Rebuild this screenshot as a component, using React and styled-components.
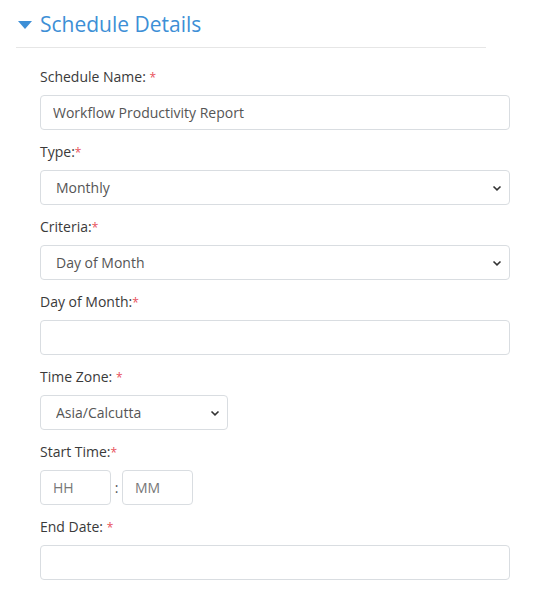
import React from 'react';
import styled, { createGlobalStyle } from 'styled-components';

const GlobalStyle = createGlobalStyle`
  body {
    margin: 0;
    background: #fff;
    font-family: "Open Sans", "Noto Sans", Arial, sans-serif;
  }
`;

const fields = [
  { label: 'Schedule Name:', space: true, kind: 'input', value: 'Workflow Productivity Report' },
  { label: 'Type:', kind: 'select', value: 'Monthly' },
  { label: 'Criteria:', kind: 'select', value: 'Day of Month' },
  { label: 'Day of Month:', kind: 'input', value: '' },
  { label: 'Time Zone:', space: true, kind: 'select', value: 'Asia/Calcutta', narrow: true },
  { label: 'Start Time:', kind: 'time' },
  { label: 'End Date:', space: true, kind: 'input', value: '' },
];

const Chevron = () => (
  <ChevronIcon width="10" height="10" viewBox="0 0 10 10">
    <path d="M1.5 3.5 L5 6.8 L8.5 3.5" fill="none" stroke="#333" strokeWidth="1.6" />
  </ChevronIcon>
);

const Control = ({ field }) => {
  if (field.kind === 'select') {
    return (
      <SelectWrap $narrow={field.narrow}>
        <Select defaultValue={field.value}>
          <option>{field.value}</option>
        </Select>
        <Chevron />
      </SelectWrap>
    );
  }
  if (field.kind === 'time') {
    return (
      <TimeRow>
        <TimeInput placeholder="HH" />
        <Colon>:</Colon>
        <TimeInput placeholder="MM" />
      </TimeRow>
    );
  }
  return <Input defaultValue={field.value} />;
};

const App = () => (
  <>
    <GlobalStyle />
    <Section>
      <Header>
        <Caret width="14" height="10" viewBox="0 0 14 10">
          <path d="M0 1 H14 L7 9 Z" fill="#3d8fd6" />
        </Caret>
        <Title>Schedule Details</Title>
      </Header>
      <Form>
        {fields.map((f) => (
          <Field key={f.label}>
            <Label>
              {f.label}
              {f.space ? ' ' : ''}
              <Star>*</Star>
            </Label>
            <Control field={f} />
          </Field>
        ))}
      </Form>
    </Section>
  </>
);

export default App;

const Section = styled.div`
  width: 470px;
  padding: 8px 0 0 16px;
`;

const Header = styled.div`
  display: flex;
  align-items: center;
  gap: 8px;
  padding: 0 0 7px 2px;
  border-bottom: 1px solid #e6e6e6;
`;

const Caret = styled.svg`
  flex: none;
  margin-top: 1px;
`;

const Title = styled.h2`
  margin: 0;
  font-size: 21px;
  font-weight: 400;
  line-height: 32px;
  color: #3d8fd6;
`;

const Form = styled.div`
  width: 470px;
  padding: 18px 0 0 24px;
  display: flex;
  flex-direction: column;
`;

const Field = styled.div`
  display: flex;
  flex-direction: column;
  margin-bottom: 11px;
`;

const Label = styled.label`
  display: block;
  height: 21px;
  font-size: 14px;
  line-height: 21px;
  color: #3a3a3a;
  margin-bottom: 8px;
`;

const Star = styled.span`
  color: #e8505b;
  font-size: 12px;
  line-height: 0;
`;

const baseField = `
  box-sizing: border-box;
  height: 35px;
  border: 1px solid #d9dde1;
  border-radius: 4px;
  background: #fff;
  font-family: inherit;
  font-size: 14px;
  color: #555;
  outline: none;
`;

const Input = styled.input`
  ${baseField}
  width: 470px;
  padding: 0 12px;
`;

const SelectWrap = styled.div`
  position: relative;
  width: ${(p) => (p.$narrow ? '188px' : '470px')};
`;

const Select = styled.select`
  ${baseField}
  width: 100%;
  padding: 0 28px 0 15px;
  appearance: none;
`;

const ChevronIcon = styled.svg`
  position: absolute;
  right: 8px;
  top: 13px;
  pointer-events: none;
`;

const TimeRow = styled.div`
  display: flex;
  align-items: center;
`;

const TimeInput = styled.input`
  ${baseField}
  width: 71px;
  padding: 0 12px;
  &::placeholder {
    color: #777;
  }
`;

const Colon = styled.span`
  width: 11px;
  text-align: center;
  font-size: 14px;
  color: #555;
`;
